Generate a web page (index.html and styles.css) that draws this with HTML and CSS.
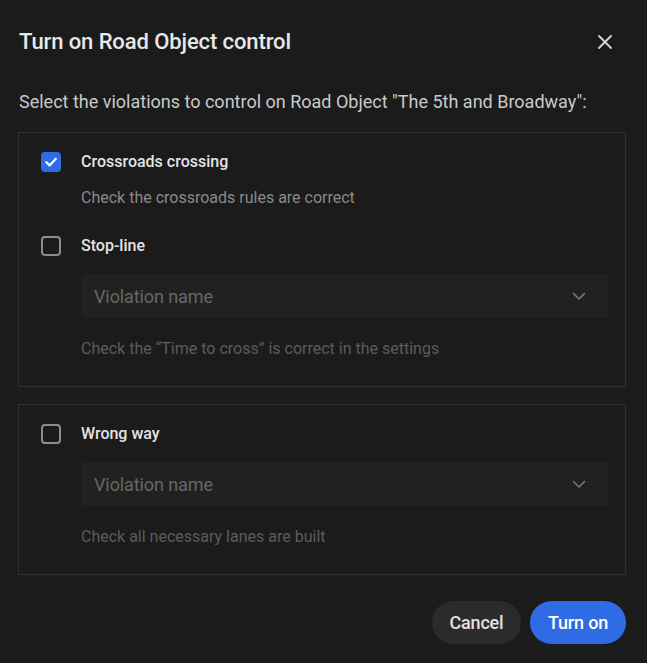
FILE: index.html
```html
<!DOCTYPE html>
<html lang="en">
<head>
    <meta charset="UTF-8">
    <meta name="viewport" content="width=device-width, initial-scale=1.0">
    <title>Turn on Road Object control</title>
    <link rel="stylesheet" href="styles.css">
</head>
<body>
    <div class="dialog">
        <div class="dialog-header">
            <h1 class="dialog-title">Turn on Road Object control</h1>
            <button class="close-btn" aria-label="Close">
                <svg width="14" height="14" viewBox="0 0 14 14">
                    <path d="M1 1 L13 13 M13 1 L1 13" stroke="#d6d6d6" stroke-width="1.8" stroke-linecap="round"/>
                </svg>
            </button>
        </div>

        <p class="subtitle">Select the violations to control on Road Object "The 5th and Broadway":</p>

        <div class="group">
            <div class="option">
                <span class="checkbox checked">
                    <svg width="14" height="14" viewBox="0 0 14 14">
                        <path d="M2.3 7.2 L5.6 10.4 L11.8 3.7" fill="none" stroke="#ffffff" stroke-width="2.2" stroke-linecap="round" stroke-linejoin="round"/>
                    </svg>
                </span>
                <span class="option-label">Crossroads crossing</span>
            </div>
            <div class="hint">Check the crossroads rules are correct</div>

            <div class="option option-next">
                <span class="checkbox"></span>
                <span class="option-label">Stop-line</span>
            </div>
            <div class="select">
                <span>Violation name</span>
                <svg width="14" height="10" viewBox="0 0 14 10">
                    <path d="M1.5 2.5 L7 8 L12.5 2.5" fill="none" stroke="#7a7a7a" stroke-width="1.6" stroke-linecap="round" stroke-linejoin="round"/>
                </svg>
            </div>
            <div class="hint hint-dim">Check the “Time to cross” is correct in the settings</div>
        </div>

        <div class="group">
            <div class="option">
                <span class="checkbox"></span>
                <span class="option-label">Wrong way</span>
            </div>
            <div class="select">
                <span>Violation name</span>
                <svg width="14" height="10" viewBox="0 0 14 10">
                    <path d="M1.5 2.5 L7 8 L12.5 2.5" fill="none" stroke="#7a7a7a" stroke-width="1.6" stroke-linecap="round" stroke-linejoin="round"/>
                </svg>
            </div>
            <div class="hint hint-dim">Check all necessary lanes are built</div>
        </div>

        <div class="actions">
            <button class="btn btn-secondary">Cancel</button>
            <button class="btn btn-primary">Turn on</button>
        </div>
    </div>
</body>
</html>
```

FILE: styles.css
```css
* {
    margin: 0;
    padding: 0;
    box-sizing: border-box;
}

body {
    min-height: 100vh;
    background: #1b1b1b;
    font-family: 'Roboto', 'Liberation Sans', sans-serif;
    color: #e6e6e6;
    overflow: hidden;
}

.dialog {
    width: 647px;
    padding: 28px 21px 0 18px;
}

.dialog-header {
    display: flex;
    align-items: center;
    justify-content: space-between;
    height: 28px;
}

.dialog-title {
    font-size: 22px;
    font-weight: 500;
    color: #e8e8e8;
    padding-left: 1px;
    letter-spacing: -0.1px;
    line-height: 28px;
}

.close-btn {
    background: none;
    border: none;
    width: 28px;
    height: 28px;
    display: flex;
    align-items: center;
    justify-content: center;
    cursor: pointer;
    margin-right: 7px;
}

.subtitle {
    margin-top: 35px;
    font-size: 18px;
    color: #c9c9c9;
    padding-left: 1px;
    line-height: 22px;
}

.group {
    margin-top: 19px;
    border: 1px solid #2f2f2f;
    padding: 19px 17px 27px 22px;
}

.group + .group {
    margin-top: 17px;
}

.option {
    display: flex;
    align-items: center;
    gap: 20px;
    height: 20px;
}

.option-next {
    margin-top: 28px;
}

.checkbox {
    width: 20px;
    height: 20px;
    border: 2px solid #8c8c8c;
    border-radius: 4px;
    display: flex;
    align-items: center;
    justify-content: center;
    flex-shrink: 0;
}

.checkbox.checked {
    background: #2f6be4;
    border-color: #2f6be4;
}

.option-label {
    font-size: 16px;
    font-weight: 500;
    color: #e4e4e4;
    line-height: 20px;
}

.hint {
    margin-top: 16px;
    margin-left: 40px;
    font-size: 16px;
    color: #8a8a8a;
    line-height: 20px;
}

.hint-dim {
    margin-top: 21px;
    color: #5c5c5c;
}

.select {
    margin-top: 18px;
    margin-left: 40px;
    height: 44px;
    background: #212121;
    border-radius: 3px;
    display: flex;
    align-items: center;
    justify-content: space-between;
    padding: 0 22px 0 13px;
    font-size: 18px;
    color: #676767;
    letter-spacing: -0.1px;
}

.actions {
    display: flex;
    justify-content: flex-end;
    gap: 9px;
    margin-top: 26px;
}

.btn {
    height: 43px;
    border: none;
    border-radius: 22px;
    font-family: 'Roboto', 'Liberation Sans', sans-serif;
    font-size: 18px;
    font-weight: 500;
    cursor: pointer;
    letter-spacing: -0.2px;
}

.btn-secondary {
    width: 89px;
    background: #2b2b2b;
    color: #e2e2e2;
}

.btn-primary {
    width: 96px;
    background: #2f6be4;
    color: #ffffff;
}
```
